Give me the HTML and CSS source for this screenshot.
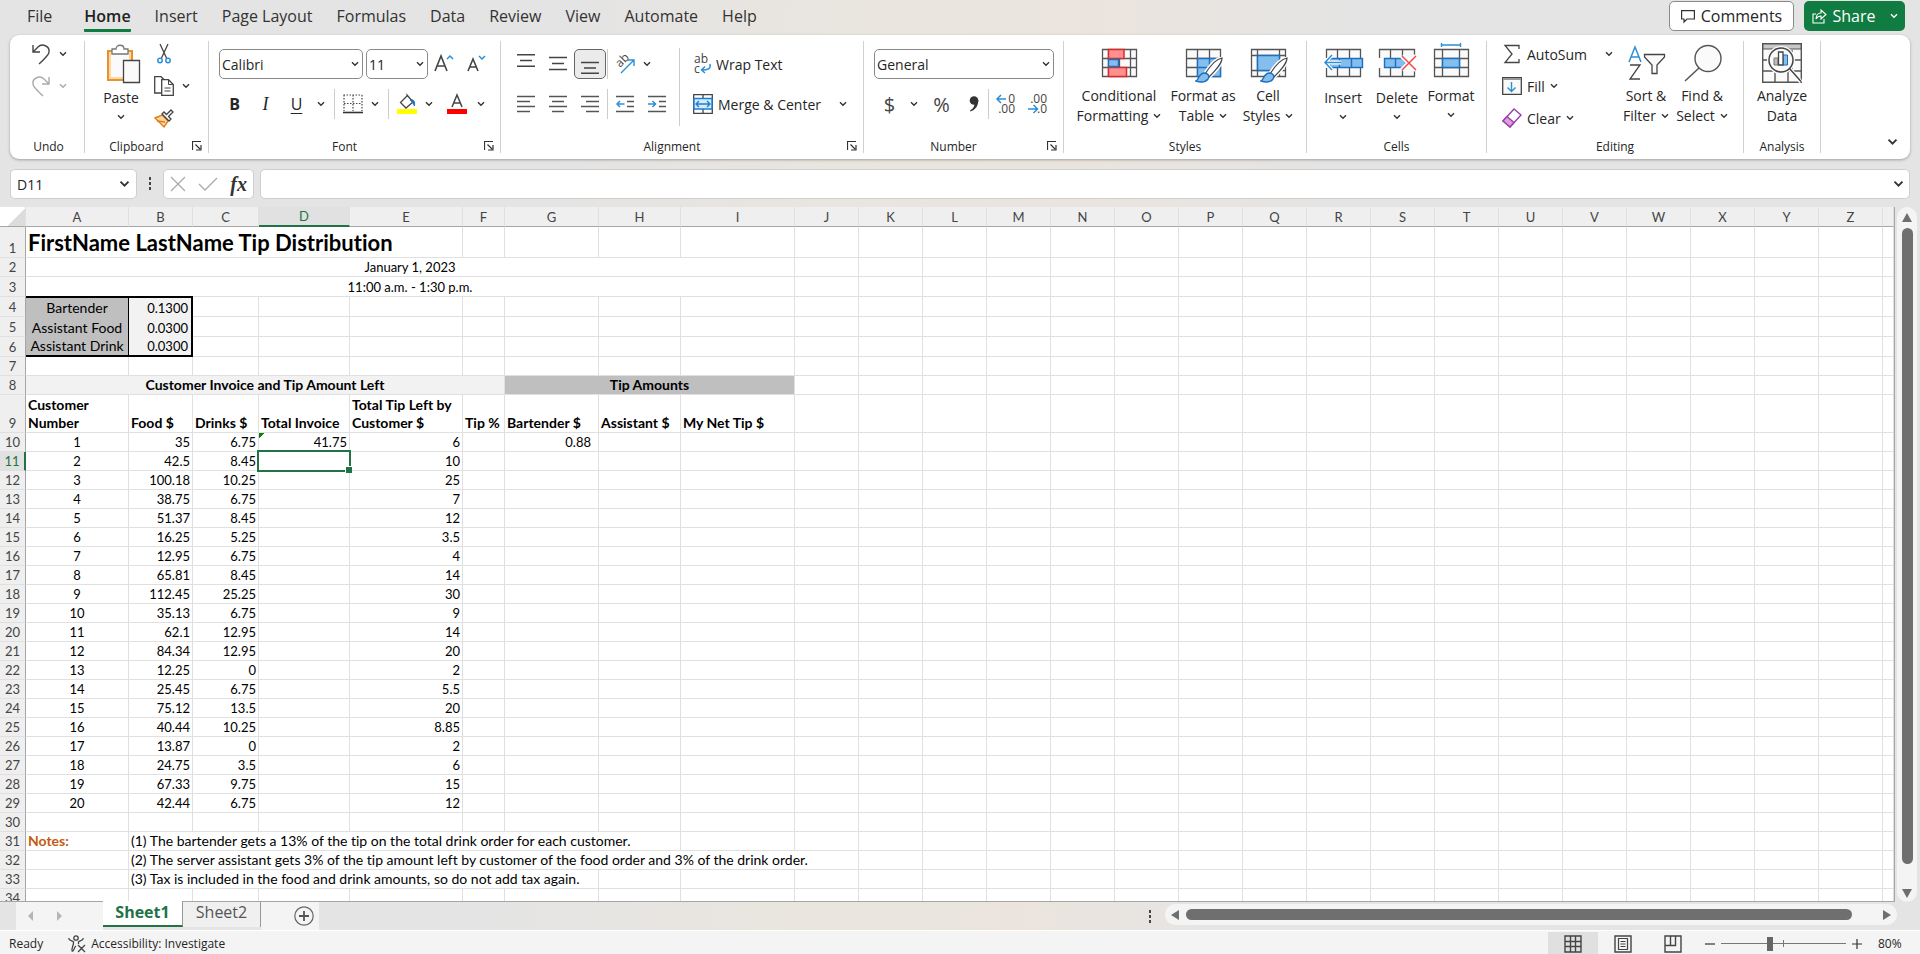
FILE: index.html
```
<!DOCTYPE html>
<html lang="en">
<head>
  <meta charset="UTF-8">
  <meta name="viewport" content="width=device-width, initial-scale=1.0">
  <title>Tip Distribution</title>
  <link rel="stylesheet" href="styles.css">
</head>
<body>
  <!-- shared glyphs -->
  <svg class="sprite" aria-hidden="true">
    <symbol id="chev" viewBox="0 0 8 6"><path d="M1 1.2 4 4.2 7 1.2" fill="none" stroke="currentColor" stroke-width="1.4"/></symbol>
    <symbol id="launch" viewBox="0 0 10 10"><path d="M.5 9V.5H9M3.5 3.5 8 8M9 4V9H4" fill="none" stroke="#333" stroke-width="1.2"/></symbol>
    <symbol id="brush" viewBox="0 0 28 26">
      <path d="M10 17C15 9 21 2 27 1 27 7 20 14 14 20Z" fill="#fff" stroke="#fff" stroke-width="4"/>
      <path d="M10 17C15 9 21 2 27 1 27 7 20 14 14 20Z" fill="#fff" stroke="#444" stroke-width="1.2"/>
      <path d="M1 24C4 23 3 17 9 16 13 16 15 19 13 22 10 26 4 25 1 24Z" fill="#83beec" stroke="#1e6fbf" stroke-width="1.4"/>
    </symbol>
  </svg>

  <header class="menu">
    <nav>
      <a href="#" class="file">File</a>
      <a href="#" class="active">Home</a>
      <a href="#">Insert</a>
      <a href="#">Page Layout</a>
      <a href="#">Formulas</a>
      <a href="#">Data</a>
      <a href="#">Review</a>
      <a href="#">View</a>
      <a href="#">Automate</a>
      <a href="#">Help</a>
    </nav>
    <button class="comments">
      <svg width="14" height="13" viewBox="0 0 14 13"><path d="M.6.6H13.4V9H6L3 12V9H.6Z" fill="none" stroke="#333" stroke-width="1.2"/></svg>
      Comments
    </button>
    <button class="share">
      <svg width="15" height="15" viewBox="0 0 15 15"><path d="M4 5H1V14H12V10M4 10C4 6 6 4 9 4V1L14 5.500 9 10V7C7 7 5 8 4 10Z" fill="none" stroke="#fff" stroke-width="1.1"/></svg>
      Share
      <svg class="chev" width="8" height="6"><use href="#chev"/></svg>
    </button>
  </header>

  <section class="ribbon">
    <!-- Undo -->
    <div class="group undo">
      <div class="stack">
        <div class="line">
          <button class="ico" aria-label="Undo"><svg width="20" height="22" viewBox="0 0 20 22"><path d="M2 2V9H9M2 9 7 4C11 0 19 3 18 9 18 12 16 13 8 21" fill="none" stroke="#444" stroke-width="1.400"/></svg></button>
          <button class="drop" aria-label="Undo list"><svg class="chev"><use href="#chev"/></svg></button>
        </div>
        <div class="line off">
          <button class="ico" aria-label="Redo"><svg width="20" height="22" viewBox="0 0 20 22"><path d="M18 2V9H11M18 9 13 4C9 0 1 3 2 9 2 12 4 13 12 21" fill="none" stroke="#aaa" stroke-width="1.400"/></svg></button>
          <button class="drop" aria-label="Redo list"><svg class="chev"><use href="#chev"/></svg></button>
        </div>
      </div>
      <div class="caption"><span>Undo</span></div>
    </div>

    <!-- Clipboard -->
    <div class="group clipboard">
      <div class="cols">
        <button class="big low">
          <svg width="40" height="40" viewBox="0 0 40 40">
            <path d="M7 8H31V37H7Z" fill="#fafafa" stroke="#e8912d" stroke-width="2"/>
            <path d="M9 10H29V35H9Z" fill="none" stroke="#fbd9a0" stroke-width="2"/>
            <path d="M11 11V6H15C15 1 23 1 23 6H27V11Z" fill="#fff" stroke="#777" stroke-width="1.300"/>
            <path d="M22.500 17.500H38.500V39.500H22.500Z" fill="#fafafa" stroke="#444" stroke-width="1.300"/>
          </svg>
          <span>Paste</span>
          <svg class="chev"><use href="#chev"/></svg>
        </button>
        <div class="stack">
          <div class="line">
            <button class="ico" aria-label="Cut"><svg width="14" height="20" viewBox="0 0 14 20"><path d="M3 0 9.500 14M11 0 4.500 14" stroke="#444" stroke-width="1.300"/><g fill="none" stroke="#2b8fd6" stroke-width="1.500"><circle cx="3" cy="16.500" r="2.200"/><circle cx="11" cy="16.500" r="2.200"/></g></svg></button>
          </div>
          <div class="line">
            <button class="ico" aria-label="Copy"><svg width="20" height="20" viewBox="0 0 20 20"><path d="M7 17H.7V.7H7L10 3.500" fill="none" stroke="#444" stroke-width="1.300"/><path d="M7.700 3.700H14.500L19.300 8.500V19.300H7.700Z" fill="#fff" stroke="#444" stroke-width="1.300"/><path d="M14.500 4V8.500H19M10.500 12H16.500M10.500 15H16.500" fill="none" stroke="#444"/></svg></button>
            <button class="drop" aria-label="Copy list"><svg class="chev"><use href="#chev"/></svg></button>
          </div>
          <div class="line">
            <button class="ico" aria-label="Format Painter"><svg width="20" height="19" viewBox="0 0 20 19"><path d="M1 9 8 6 14 12 10 18Z" fill="#fbd9a0" stroke="#e07b1a" stroke-width="1.400"/><path d="M3 12 11 13" stroke="#e07b1a" stroke-width="1.400"/><path d="M8 5 10 3 12.500 5.500 17 1 19 3 14.500 7.500 17 10 15 12Z" fill="#fff" stroke="#444" stroke-width="1.300"/></svg></button>
          </div>
        </div>
      </div>
      <div class="caption"><span>Clipboard</span><button aria-label="Clipboard settings"><svg><use href="#launch"/></svg></button></div>
    </div>

    <!-- Font -->
    <div class="group font">
      <div class="rows">
        <div class="row">
          <label class="combo family"><select aria-label="Font"><option>Calibri</option></select><svg class="chev"><use href="#chev"/></svg></label>
          <label class="combo size"><select aria-label="Font size"><option>11</option></select><svg class="chev"><use href="#chev"/></svg></label>
          <button class="w32" aria-label="Increase font size"><svg width="20" height="20" viewBox="0 0 20 20"><path d="M1 17 7 2 13 17M3 12H11" fill="none" stroke="#444" stroke-width="1.600"/><path d="M13 5 16 2 19 5" fill="none" stroke="#2b8fd6" stroke-width="1.500"/></svg></button>
          <button class="w32" aria-label="Decrease font size"><svg width="20" height="20" viewBox="0 0 20 20"><path d="M2 17 7 5 12 17M4 13H10" fill="none" stroke="#444" stroke-width="1.600"/><path d="M13 2 16 5 19 2" fill="none" stroke="#2b8fd6" stroke-width="1.500"/></svg></button>
        </div>
        <div class="row">
          <button class="w31 bold">B</button>
          <button class="w31 italic">I</button>
          <button class="w31 under">U</button>
          <button class="drop" aria-label="Underline list"><svg class="chev"><use href="#chev"/></svg></button>
          <i class="sep"></i>
          <button class="w27" aria-label="Borders"><svg width="20" height="20" viewBox="0 0 20 20"><path d="M.500 1H19M1 1V17M10 1V17M19 1V17M1 9.500H19" fill="none" stroke="#444" stroke-width="1.200" stroke-dasharray="1.500 1.500"/><path d="M0 18.500H20" stroke="#333" stroke-width="1.600"/></svg></button>
          <button class="drop" aria-label="Borders list"><svg class="chev"><use href="#chev"/></svg></button>
          <i class="sep"></i>
          <button class="w27" aria-label="Fill Color"><svg width="20" height="20" viewBox="0 0 20 20"><path d="M10 1 16 8 9 14 3.500 8.500 10 2Z" fill="#fff" stroke="#444" stroke-width="1.300"/><path d="M13 6C17 5 18 8 17.500 12 16 10 16 8 13 6Z" fill="#1e6fbf" stroke="#1e6fbf"/><path d="M0 15H20V20H0Z" fill="#ff0"/></svg></button>
          <button class="drop" aria-label="Fill colors"><svg class="chev"><use href="#chev"/></svg></button>
          <button class="w37" aria-label="Font Color"><svg width="20" height="20" viewBox="0 0 20 20"><path d="M5 13 10 1 15 13M6.500 9H13.500" fill="none" stroke="#444" stroke-width="1.500"/><path d="M0 15H20V20H0Z" fill="#f00"/></svg></button>
          <button class="drop slim" aria-label="Font colors"><svg class="chev"><use href="#chev"/></svg></button>
        </div>
      </div>
      <div class="caption"><span>Font</span><button aria-label="Font settings"><svg><use href="#launch"/></svg></button></div>
    </div>

    <!-- Alignment -->
    <div class="group alignment">
      <div class="cols">
        <div class="rows aligns">
          <div class="row">
            <button class="w32" aria-label="Top Align"><svg width="18" height="20" viewBox="0 0 18 20"><path d="M0 .700H18M3 6.500H15M0 12.300H18" stroke="#444" stroke-width="1.400"/></svg></button>
            <button class="w32" aria-label="Middle Align"><svg width="18" height="20" viewBox="0 0 18 20"><path d="M0 3.500H18M3 9.500H15M0 15.500H18" stroke="#444" stroke-width="1.400"/></svg></button>
            <button class="w32 on" aria-label="Bottom Align"><svg width="18" height="20" viewBox="0 0 18 20"><path d="M0 8.500H18M3 14H15M0 19.300H18" stroke="#444" stroke-width="1.400"/></svg></button>
            <i class="sep thin"></i>
            <button class="w32" aria-label="Orientation"><svg width="22" height="20" viewBox="0 0 22 20"><text x="0" y="0" transform="translate(6 14) rotate(-45)" font-size="12" fill="#444">ab</text><path d="M7 19 20 6M14 6H20V12" fill="none" stroke="#2b8fd6" stroke-width="1.400"/></svg></button>
            <button class="drop slim" aria-label="Orientation list"><svg class="chev"><use href="#chev"/></svg></button>
          </div>
          <div class="row">
            <button class="w32" aria-label="Align Left"><svg width="18" height="18" viewBox="0 0 18 18"><path d="M0 1.500H18M0 6.500H13M0 11.500H18M0 16.500H13" stroke="#555" stroke-width="1.500"/></svg></button>
            <button class="w32" aria-label="Center"><svg width="18" height="18" viewBox="0 0 18 18"><path d="M0 1.500H18M3 6.500H15M0 11.500H18M3 16.500H15" stroke="#555" stroke-width="1.500"/></svg></button>
            <button class="w32" aria-label="Align Right"><svg width="18" height="18" viewBox="0 0 18 18"><path d="M0 1.500H18M5 6.500H18M0 11.500H18M5 16.500H18" stroke="#555" stroke-width="1.500"/></svg></button>
            <i class="sep thin"></i>
            <button class="w32" aria-label="Decrease Indent"><svg width="18" height="18" viewBox="0 0 18 18"><path d="M0 1.500H18M11 6.500H18M11 11.500H18M0 16.500H18" stroke="#555" stroke-width="1.500"/><path d="M8.500 9H1M4 6 1 9 4 12" fill="none" stroke="#2b8fd6" stroke-width="1.500"/></svg></button>
            <button class="w32" aria-label="Increase Indent"><svg width="18" height="18" viewBox="0 0 18 18"><path d="M0 1.500H18M11 6.500H18M11 11.500H18M0 16.500H18" stroke="#555" stroke-width="1.500"/><path d="M0 9H7.500M4.500 6 7.500 9 4.500 12" fill="none" stroke="#2b8fd6" stroke-width="1.500"/></svg></button>
          </div>
        </div>
        <div class="rows wraps">
          <div class="row">
            <button class="text"><svg width="20" height="20" viewBox="0 0 20 20"><text x="3" y="9" font-size="12" fill="#444">ab</text><text x="3" y="19" font-size="12" fill="#444">c</text><path d="M19 10C20 15 17 16 11 16M14 12.500 10.500 16 14 19" fill="none" stroke="#2b8fd6" stroke-width="1.500"/></svg>Wrap Text</button>
          </div>
          <div class="row">
            <button class="text merge"><svg width="20" height="20" viewBox="0 0 20 20"><path d="M.700.700H19.300V19.300H.700ZM10 1V5M10 15V19" fill="#fff" stroke="#444" stroke-width="1.300"/><path d="M1 4.500H19V15H1Z" fill="#d6eafa" stroke="#1e7fd0" stroke-width="1.400"/><path d="M3 10H17M6 7 3 10 6 13M14 7 17 10 14 13" fill="none" stroke="#1e7fd0" stroke-width="1.400"/></svg>Merge &amp; Center</button>
            <button class="drop" aria-label="Merge list"><svg class="chev"><use href="#chev"/></svg></button>
          </div>
        </div>
      </div>
      <div class="caption"><span>Alignment</span><button aria-label="Alignment settings"><svg><use href="#launch"/></svg></button></div>
    </div>

    <!-- Number -->
    <div class="group number">
      <div class="rows">
        <div class="row">
          <label class="combo format"><select aria-label="Number format"><option>General</option></select><svg class="chev"><use href="#chev"/></svg></label>
        </div>
        <div class="row">
          <button class="w31 sign">$</button>
          <button class="drop" aria-label="Currency list"><svg class="chev"><use href="#chev"/></svg></button>
          <button class="w37 sign">%</button>
          <button class="w27" aria-label="Comma Style"><svg width="10" height="18" viewBox="0 0 10 18"><circle cx="5" cy="5.500" r="4.300" fill="#333"/><path d="M9.300 5C9.500 11 6 15 1.500 16.500L1 15.500C4 14 6 11 5.500 7Z" fill="#333"/></svg></button>
          <i class="sep thin"></i>
          <button class="w32" aria-label="Increase Decimal"><svg width="20" height="20" viewBox="0 0 20 20"><g font-size="12" fill="#444"><text x="19" y="9" text-anchor="end">0</text><text x="19" y="19" text-anchor="end">.00</text></g><path d="M10 5H1M5 1 1 5 5 9" fill="none" stroke="#2b8fd6" stroke-width="1.500"/></svg></button>
          <button class="w32" aria-label="Decrease Decimal"><svg width="20" height="20" viewBox="0 0 20 20"><g font-size="12" fill="#444"><text x="19" y="9" text-anchor="end">.00</text><text x="19" y="19" text-anchor="end">.0</text></g><path d="M0 15H9M5.500 11 9.500 15 5.500 19" fill="none" stroke="#2b8fd6" stroke-width="1.500"/></svg></button>
        </div>
      </div>
      <div class="caption"><span>Number</span><button aria-label="Number settings"><svg><use href="#launch"/></svg></button></div>
    </div>

    <!-- Styles -->
    <div class="group looks">
      <div class="cols">
        <button class="big w92">
          <svg width="40" height="40" viewBox="0 0 40 40"><path d="M3.500 6.500H37.500V33.500H3.500ZM3.500 15.500H37.500M3.500 24.500H37.500M9.500 6.500V33.500M20.500 6.500V33.500M31.500 6.500V33.500" fill="#fafafa" stroke="#555" stroke-width="1.300"/><path d="M9.500 6.500H25V15.500H9.500ZM9.500 24.500H27.500V33.500H9.500Z" fill="#ff9090" stroke="#d92b2b" stroke-width="1.500"/><path d="M9.500 16.500H19.500V23.500H9.500Z" fill="#83beec" stroke="#1e6fbf" stroke-width="1.400"/></svg>
          <span>Conditional</span>
          <span>Formatting <svg class="chev"><use href="#chev"/></svg></span>
        </button>
        <button class="big w76">
          <svg width="40" height="40" viewBox="0 0 40 40"><path d="M3.500 6.500H37.500V33.500H3.500ZM3.500 15.500H37.500M3.500 24.500H37.500M14.500 6.500V33.500M26.500 6.500V33.500" fill="#fafafa" stroke="#555" stroke-width="1.300"/><path d="M14.500 15.500H37.500V33.500H14.500ZM14.500 24.500H37.500M26.500 15.500V33.500" fill="#83beec" stroke="#1e6fbf" stroke-width="1.400"/><use href="#brush" x="12" y="14" width="28" height="26"/></svg>
          <span>Format as</span>
          <span>Table <svg class="chev"><use href="#chev"/></svg></span>
        </button>
        <button class="big w54">
          <svg width="40" height="40" viewBox="0 0 40 40"><path d="M3.500 6.500H37.500V33.500H3.500ZM3.500 12.500H37.500M3.500 27.500H37.500M9.500 6.500V33.500M31.500 6.500V33.500" fill="#fafafa" stroke="#555" stroke-width="1.300"/><path d="M9.500 12.500H31.500V27.500H9.500Z" fill="#83beec" stroke="#1e6fbf" stroke-width="1.500"/><use href="#brush" x="12" y="14" width="28" height="26"/></svg>
          <span>Cell</span>
          <span>Styles <svg class="chev"><use href="#chev"/></svg></span>
        </button>
      </div>
      <div class="caption"><span>Styles</span></div>
    </div>

    <!-- Cells -->
    <div class="group cells">
      <div class="cols">
        <button class="big low w54">
          <svg width="40" height="40" viewBox="0 0 40 40"><path d="M3.500 6.500H37.500V33.500H3.500ZM14.500 6.500V33.500M26.500 6.500V33.500" fill="#fafafa" stroke="#555" stroke-width="1.300"/><path d="M0 15H39V25H0Z" fill="#fff"/><path d="M7 15.500H39.500V24.500H7ZM16.500 15.500V24.500M28.500 15.500V24.500" fill="#83beec" stroke="#1e6fbf" stroke-width="1.400"/><path d="M18 19.500H2M9 12 2 19.500 9 27" fill="none" stroke="#fff" stroke-width="4"/><path d="M18 19.500H2M9 12 2 19.500 9 27" fill="none" stroke="#2b8fd6" stroke-width="1.500"/></svg>
          <span>Insert</span>
          <svg class="chev"><use href="#chev"/></svg>
        </button>
        <button class="big low w54">
          <svg width="40" height="40" viewBox="0 0 40 40"><path d="M2.500 6.500H37.500V33.500H2.500ZM13.500 6.500V33.500M25.500 6.500V33.500" fill="#fafafa" stroke="#555" stroke-width="1.300"/><path d="M0 15H39V25H0Z" fill="#fff"/><path d="M7.500 15.500H25L29 20 25 24.500H7.500ZM18.500 15.500V24.500" fill="#83beec" stroke="#1e6fbf" stroke-width="1.400"/><path d="M25 13 39 27M39 13 25 27" stroke="#fff" stroke-width="5"/><path d="M25 13 39 27M39 13 25 27" stroke="#f04a4a" stroke-width="1.500"/></svg>
          <span>Delete</span>
          <svg class="chev"><use href="#chev"/></svg>
        </button>
        <button class="big w54">
          <svg width="40" height="40" viewBox="0 0 40 40"><path d="M3.500 6.500H37.500V33.500H3.500ZM3.500 15.500H37.500M3.500 24.500H37.500M11.500 6.500V33.500M28.500 6.500V33.500" fill="#fafafa" stroke="#555" stroke-width="1.300"/><path d="M11.500 15.500H28.500V24.500H11.500Z" fill="#83beec" stroke="#1e6fbf" stroke-width="1.500"/><path d="M10.500 0V4M29.500 0V4M11 2H29" stroke="#2b8fd6" stroke-width="1.400"/></svg>
          <span>Format</span>
          <svg class="chev"><use href="#chev"/></svg>
        </button>
      </div>
      <div class="caption"><span>Cells</span></div>
    </div>

    <!-- Editing -->
    <div class="group editing">
      <div class="cols">
        <div class="stack">
          <div class="line">
            <button class="ico wide"><svg width="20" height="20" viewBox="0 0 20 20"><path d="M17 5V1.500H3L10 10 3 18.500H17V15" fill="none" stroke="#444" stroke-width="1.300"/></svg>AutoSum</button>
            <button class="drop end" aria-label="AutoSum list"><svg class="chev"><use href="#chev"/></svg></button>
          </div>
          <div class="line">
            <button class="ico wide"><svg width="20" height="20" viewBox="0 0 20 20"><path d="M.700 1.700H19.300V18.300H.700Z" fill="#fafafa" stroke="#444" stroke-width="1.300"/><path d="M1 3H19" stroke="#999" stroke-width="2"/><path d="M9.500 6V15.500M5.500 11.500 9.500 15.500 13.500 11.500" fill="none" stroke="#2b8fd6" stroke-width="1.400"/></svg>Fill <svg class="chev"><use href="#chev"/></svg></button>
          </div>
          <div class="line">
            <button class="ico wide"><svg width="20" height="20" viewBox="0 0 20 20"><path d="M1 13 12 1 19 7 8 19Z" fill="#fff" stroke="#9b3fa8" stroke-width="1.400"/><path d="M1 13 5 8.500 12 14.500 8 19Z" fill="#dd9fdf" stroke="#9b3fa8" stroke-width="1.400"/></svg>Clear <svg class="chev"><use href="#chev"/></svg></button>
          </div>
        </div>
        <button class="big w56">
          <svg width="40" height="40" viewBox="0 0 40 40"><path d="M3 19 9 4 15 19M5 14H13" fill="none" stroke="#2b8fd6" stroke-width="1.500"/><path d="M4 22H14L4 36H14" fill="none" stroke="#444" stroke-width="1.300"/><path d="M18.500 11.500H38.500V14L31 22V30.500H26V22L18.500 14Z" fill="#fafafa" stroke="#444" stroke-width="1.300"/></svg>
          <span>Sort &amp;</span>
          <span>Filter <svg class="chev"><use href="#chev"/></svg></span>
        </button>
        <button class="big w56">
          <svg width="40" height="40" viewBox="0 0 40 40"><circle cx="26" cy="15.500" r="13" fill="#fafafa" stroke="#555" stroke-width="1.400"/><path d="M17 25 3 38" stroke="#555" stroke-width="1.500"/></svg>
          <span>Find &amp;</span>
          <span>Select <svg class="chev"><use href="#chev"/></svg></span>
        </button>
      </div>
      <div class="caption"><span>Editing</span></div>
    </div>

    <!-- Analysis -->
    <div class="group analysis">
      <div class="cols">
        <button class="big w76">
          <svg width="40" height="40" viewBox="0 0 40 40"><path d="M.700.700H39.300V39.300H.700ZM1 17H39M1 28H39M13 28V39M26 28V39M30 7V28" fill="#fafafa" stroke="#555" stroke-width="1.400"/><path d="M1 1H39V6H1Z" fill="#c8c8c8" stroke="#555"/><circle cx="19" cy="17" r="14" fill="#fafafa"/><path d="M28 26 39 39" stroke="#fff" stroke-width="4"/><circle cx="19" cy="17" r="12" fill="#fafafa" stroke="#444" stroke-width="1.500"/><path d="M12 15H16V22H12Z" fill="#bbb" stroke="#777"/><path d="M21 12H25.500V22H21Z" fill="#83beec" stroke="#1e6fbf"/><path d="M16.500 9H21V22H16.500Z" fill="#fff" stroke="#444" stroke-width="1.300"/><path d="M27.500 25.500 39 38.500" stroke="#444" stroke-width="1.500"/></svg>
          <span>Analyze</span>
          <span>Data</span>
        </button>
      </div>
      <div class="caption"><span>Analysis</span></div>
    </div>
    <button class="collapse" aria-label="Collapse ribbon"><svg class="chev heavy"><use href="#chev"/></svg></button>
  </section>

  <section class="formula">
    <div class="namebox"><input value="D11" aria-label="Name box"><button aria-label="Names"><svg class="chev heavy"><use href="#chev"/></svg></button></div>
    <span class="dots"></span>
    <div class="fxbar">
      <button aria-label="Cancel"><svg width="16" height="16" viewBox="0 0 16 16"><path d="M1 1 15 15M15 1 1 15" stroke="#aaa" stroke-width="1.300"/></svg></button>
      <button aria-label="Enter"><svg width="20" height="16" viewBox="0 0 20 16"><path d="M1 8 7 14 19 2" fill="none" stroke="#aaa" stroke-width="1.300"/></svg></button>
      <button class="fx">fx</button>
    </div>
    <div class="entry"><input aria-label="Formula bar"><button aria-label="Expand"><svg class="chev heavy"><use href="#chev"/></svg></button></div>
  </section>

  <main>
    <div class="grid">
      <table id="sheet"></table>
    </div>
    <div class="vscroll"><i class="up"></i><b></b><i class="down"></i></div>
  </main>

  <footer class="tabs">
    <div class="arrows"><i class="prev"></i><i class="next"></i></div>
    <button class="tab current">Sheet1</button>
    <button class="tab">Sheet2</button>
    <button class="add" aria-label="New sheet"><svg width="20" height="20" viewBox="0 0 20 20"><circle cx="10" cy="10" r="9.200" fill="none" stroke="#666" stroke-width="1.200"/><path d="M10 5V15M5 10H15" stroke="#555" stroke-width="1.800"/></svg></button>
    <span class="dots"></span>
    <div class="hscroll"><i class="prev"></i><b></b><i class="next"></i></div>
  </footer>

  <footer class="status">
    <span class="ready">Ready</span>
    <button class="access"><svg width="18" height="18" viewBox="0 0 18 18"><g fill="none" stroke="#444" stroke-width="1.300"><circle cx="8" cy="3" r="2.200"/><path d="M1 3C0 5 5 6 5.500 7 6 10 3 14 4 16 6 17 6 12 8 11M15 3C16 5 11 6 10.500 7V9M10 10 17 17M17 10 10 17"/></g></svg>Accessibility: Investigate</button>
    <div class="views">
      <button class="on" aria-label="Normal"><svg width="18" height="18" viewBox="0 0 18 18"><path d="M1 1H17V17H1ZM1 6.500H17M1 11.500H17M6.500 1V17M11.500 1V17" fill="none" stroke="#444" stroke-width="1.400"/></svg></button>
      <button aria-label="Page Layout"><svg width="18" height="18" viewBox="0 0 18 18"><path d="M1 1H17V17H1Z" fill="none" stroke="#444" stroke-width="1.400"/><path d="M4.500 3.500H13.500V14.500H4.500ZM6.500 6.500H11.500M6.500 9H11.500M6.500 11.500H11.500" fill="none" stroke="#444" stroke-width="1.200"/></svg></button>
      <button aria-label="Page Break"><svg width="18" height="18" viewBox="0 0 18 18"><path d="M1 1H17V17H1ZM1 10.500H11.500V1M6.500 1V10" fill="none" stroke="#444" stroke-width="1.400"/></svg></button>
    </div>
    <div class="zoom">
      <button aria-label="Zoom out"><svg width="10" height="10"><path d="M0 5H10" stroke="#333" stroke-width="1.200"/></svg></button>
      <input type="range" min="10" max="190" value="80" aria-label="Zoom">
      <button aria-label="Zoom in"><svg width="10" height="10"><path d="M0 5H10M5 0V10" stroke="#333" stroke-width="1.200"/></svg></button>
      <span>80%</span>
    </div>
  </footer>

  <script src="sheet.js"></script>
</body>
</html>
```
FILE: styles.css
```
* { box-sizing: border-box; }
body {
  margin: 0; height: 100vh; overflow: hidden;
  display: flex; flex-direction: column;
  background: linear-gradient(95deg, #e4e4e4 28%, #e9e5df 42%, #ebe4de 55%, #e4e4e4 68%);
  color: #262626; font-family: "Open Sans", "Noto Sans", sans-serif; font-size: 14px;
}
button, input, select { font: inherit; color: inherit; border: 0; background: none; padding: 0; margin: 0; outline: 0; }
button { display: flex; align-items: center; justify-content: center; white-space: nowrap; }
svg { flex: none; display: block; overflow: visible; }
.sprite { position: absolute; width: 0; height: 0; }
.chev { width: 8px; height: 6px; color: #333; }
.chev.heavy { width: 11px; height: 8px; }

/* ---- menu ---- */
.menu { display: flex; align-items: flex-start; height: 35px; padding: 1px 15px 0 27px; font-size: 16px; flex: none; }
.menu nav { display: flex; gap: 24px; flex: 1; }
.menu a { color: #333; text-decoration: none; line-height: 31px; height: 31px; border-bottom: 3px solid transparent; }
.menu .file { margin-right: 8px; }
.menu .active { font-weight: 600; color: #222; border-radius: 1px; border-color: #0f7b41; }
.comments, .share { height: 30px; gap: 6px; border-radius: 5px; }
.comments { width: 125px; background: #fff; border: 1px solid #8a8a8a; margin-right: 10px; }
.share { width: 101px; background: #107c41; color: #fff; }
.share .chev { color: #fff; margin-left: 8px; }

/* ---- ribbon ---- */
.ribbon {
  display: flex; flex: none; height: 124px; margin: 0 10px; padding: 6px 0;
  background: #fff; border-radius: 9px; box-shadow: 0 1px 3px rgba(0,0,0,.3);
}
.group { display: flex; flex-direction: column; border-right: 1px solid #d0d0d0; }
.cols { display: flex; }
.group > :first-child { height: 98px; }
.caption { display: flex; height: 14px; font-size: 12px; line-height: 16px; }
.caption span { flex: 1; text-align: center; }
.caption button { width: 18px; margin-right: 2px; }
.caption button svg { width: 10px; height: 10px; }
.undo { width: 75px; padding-left: 3px; }
.undo .stack { padding-left: 15px; }
.clipboard { width: 124px; padding-left: 6px; }
.clipboard .caption { margin-left: -6px; }
.font { width: 292px; }
.alignment { width: 363px; }
.number { width: 200px; }
.looks { width: 243px; }
.looks .cols, .cells .cols { padding-left: 9px; }
.cells { width: 180px; }
.editing { width: 257px; }
.analysis { width: 77px; }

.stack { display: flex; flex-direction: column; gap: 6px; }
.line { display: flex; height: 26px; }
.ico { width: 26px; }
.ico.wide { width: auto; gap: 5px; }
.drop { width: 18px; }
.drop.slim { width: 12px; }
.drop.end { margin-left: auto; }
.off .chev { color: #aaa; }
.editing .stack { width: 131px; padding-left: 15px; }

.big { display: flex; flex-direction: column; justify-content: flex-start; width: 60px; padding-top: 2px; line-height: 20px; }
.big > svg:first-child { margin-bottom: 3px; }
.big.low > svg:first-child { margin-bottom: 5px; }
.big span { display: flex; align-items: center; gap: 5px; }
.big > .chev { margin-top: 6px; }
.w27 { width: 27px; }
.w31 { width: 31px; }
.w32 { width: 32px; }
.w37 { width: 37px; }
.w54 { width: 54px; }
.w56 { width: 56px; }
.w76 { width: 76px; }
.w92 { width: 92px; }

.rows { display: flex; flex-direction: column; gap: 10px; padding: 8px 0 0 10px; }
.row { display: flex; height: 30px; }
.sep { width: 9px; border-left: 1px solid #ccc; margin-left: 4px; margin-right: -4px; }
.sep.thin { width: 3px; margin: 0 -1px 0 1px; }
.combo { display: flex; align-items: center; border: 1px solid #8a8a8a; border-radius: 5px; padding: 0 3px 0 2px; }
.combo select { flex: 1; appearance: none; min-width: 0; }
.family { width: 144px; margin-right: 3px; }
.size { width: 62px; }
.format { width: 180px; }
.bold { font-weight: 700; font-size: 16px; }
.italic { font-family: "Liberation Serif", serif; font-style: italic; font-size: 18px; }
.under { text-decoration: underline; text-underline-offset: 3px; font-size: 16px; }
.sign { font-size: 20px; color: #444; }
.on { background: #ebebeb; }
.row .on { border: 1px solid #666; border-radius: 5px; }
.aligns { width: 179px; border-right: 1px solid #ccc; height: 78px; }
.alignment .rows { padding-left: 9px; }
.alignment .aligns { margin-top: 7px; padding-top: 1px; }
.alignment .wraps { padding-left: 11px; }
.text { gap: 5px; }
.merge { width: 132px; margin-right: 11px; }
.collapse { margin: auto 12px 4px auto; width: 12px; height: 14px; }

/* ---- formula bar ---- */
.formula { display: flex; flex: none; height: 30px; margin: 10px 10px 8px; }
.namebox, .fxbar, .entry { display: flex; background: #fff; border: 1px solid #cfcfcf; border-radius: 5px; }
.namebox { width: 127px; padding: 0 6px; }
.namebox input, .entry input { flex: 1; min-width: 0; }
.dots { width: 2px; height: 14px; margin: auto 12px; background: repeating-linear-gradient(#444 0 3px, transparent 3px 5px); }
.fxbar { width: 91px; justify-content: space-around; }
.fx { font: italic 700 20px "Liberation Serif", serif; color: #333; }
.entry { flex: 1; margin-left: 6px; padding: 0 5px; }

/* ---- sheet ---- */
main { flex: 1; min-height: 0; display: flex; }
.grid { flex: 1; min-width: 0; overflow: hidden; background: #fff; border: solid #a6a6a6; border-width: 0 1px 1px 0; }
table { width: 100%; table-layout: fixed; border-spacing: 0; font-family: Lato, sans-serif; font-variant-ligatures: none; font-size: 13px; line-height: 18px; color: #000; }
th, td { padding: 0 2px; border: solid #e0e0e0; border-width: 0 1px 1px 0; white-space: nowrap; vertical-align: bottom; text-align: right; }
th { background: #efefef; color: #444; font-weight: 400; text-align: center; padding: 0; }
thead th { height: 20px; border-bottom-color: #a6a6a6; }
tbody th { border-right-color: #a6a6a6; }
th.hot { background: #e1e1e1; color: #217346; }
thead th.hot { border-bottom: 2px solid #217346; line-height: 17px; }
tbody th.hot { border-right: 2px solid #217346; }
.corner { background: linear-gradient(135deg, transparent 60%, #dcdcdc 60%); }
.t { font-size: 14px; }
.row-1 td { height: 31px; }
.row-1 .title { font-size: 22px; font-weight: 700; line-height: 28px; }
.row-3 td, .row-4 td, .row-5 td, .row-6 td { height: 20px; }
.row-9 td { white-space: normal; }
.row-9 td, .row-9 th { height: 38px; }
.left { text-align: left; }
.center { text-align: center; }
.b { font-weight: 700; }
.note { color: #c55a11; }
.dark { background: #bfbfbf; }
.light { background: #f2f2f2; }
.inset { padding-right: 7px; }
td.rate { border-right: 1px solid #000; border-bottom: 0; }
td.val { padding-right: 3px; border-right: 2px solid #000; border-bottom: 0; }
.row-4 .rate, .row-4 .val { border-top: 1px solid #000; box-shadow: 0 -1px #000; }
.row-6 .rate, .row-6 .val { border-bottom: 2px solid #000; }
.flag { background: linear-gradient(135deg, #107c10 4px, transparent 4px); }
.picked { position: relative; }
.picked::before { content: ""; position: absolute; inset: -2px -2px -2px -2px; border: 2px solid #217346; }
.picked::after { content: ""; position: absolute; right: -3px; bottom: -3px; width: 6px; height: 6px; background: #217346; border: solid #fff; border-width: 1px 0 0 1px; }

/* ---- scroll bars ---- */
.vscroll { width: 20px; margin: 0 3px 0 2px; padding: 6px 0 4px; border-radius: 10px; background: #f4f4f4; display: flex; flex-direction: column; align-items: center; }
.vscroll b { width: 11px; height: 636px; flex: 0 1 auto; margin: 6px 0 auto; border-radius: 6px; background: #6f6f6f; }
.up, .down { border: solid transparent; border-width: 0 5px; }
.up { border-bottom: 9px solid #6f6f6f; }
.down { border-top: 9px solid #6f6f6f; }
.prev, .next { border: solid transparent; border-width: 5px 0; }
.prev { border-right: 8px solid #6f6f6f; }
.next { border-left: 8px solid #6f6f6f; }
.hscroll { width: 732px; height: 21px; margin: 2px 23px 0 0; padding: 0 6px; border-radius: 10px; background: #f4f4f4; display: flex; align-items: center; }
.hscroll b { flex: 1; height: 11px; margin: 0 31px 0 7px; border-radius: 6px; background: #6f6f6f; }

/* ---- sheet tabs ---- */
.tabs { display: flex; height: 28px; flex: none; }
.arrows { display: flex; align-items: center; gap: 24px; width: 87px; margin-left: 16px; padding-left: 12px; background: #f4f4f4; }
.arrows .prev { border-right: 5px solid #b5b5b5; }
.arrows .next { border-left: 5px solid #b5b5b5; }
.tab { width: 78px; height: 25px; font-size: 16px; line-height: 20px; padding-bottom: 6px; color: #555; background: #f0f0f0; border-right: 1px solid #999; }
.tab.current { width: 80px; height: 26px; margin-top: -1px; padding-bottom: 3px; background: #fff; color: #217346; font-weight: 700; border-bottom: 2px solid #217346; }
.add { width: 58px; padding-left: 28px; background: #f4f4f4; }
.tabs .dots { margin: 8px 14px 0 auto; }

/* ---- status bar ---- */
.status { display: flex; align-items: center; height: 24px; flex: none; background: #f4f4f4; border-top: 1px solid #fff; font-size: 12px; padding: 2px 0 0 9px; }
.access { gap: 5px; margin-left: 25px; }
.views { display: flex; margin-left: auto; }
.views button { width: 50px; height: 23px; }
.views .on { background: #e0e0e0; }
.zoom { display: flex; align-items: center; gap: 6px; padding: 0 17px 0 7px; }
.zoom span { margin-left: 10px; width: 25px; }
.zoom input { appearance: none; width: 125px; height: 14px; background: linear-gradient(#777, #777) center / 100% 1px no-repeat, linear-gradient(#777, #777) center / 1px 7px no-repeat; }
.zoom input::-webkit-slider-thumb { appearance: none; width: 6px; height: 14px; background: #666; }
```
FILE: sheet.js
```
// column widths, A..Z
const widths = [103, 64, 66, 91, 113, 42, 94, 82, 114];
while (widths.length < 26) widths.push(64);

// food, drinks, tip left by customer
const orders = [
  [35, 6.75, 6], [42.5, 8.45, 10], [100.18, 10.25, 25], [38.75, 6.75, 7],
  [51.37, 8.45, 12], [16.25, 5.25, 3.5], [12.95, 6.75, 4], [65.81, 8.45, 14],
  [112.45, 25.25, 30], [35.13, 6.75, 9], [62.1, 12.95, 14], [84.34, 12.95, 20],
  [12.25, 0, 2], [25.45, 6.75, 5.5], [75.12, 13.5, 20], [40.44, 10.25, 8.85],
  [13.87, 0, 2], [24.75, 3.5, 6], [67.33, 9.75, 15], [42.44, 6.75, 12]
];

// cell = [text, classes, colspan]
const rows = {
  1: [['FirstName LastName Tip Distribution', 'title left', 5]],
  2: [['January 1, 2023', 'center', 9]],
  3: [['11:00 a.m. - 1:30 p.m.', 'center', 9]],
  4: [['Bartender', 't rate dark center'], ['0.1300', 'val light']],
  5: [['Assistant Food', 't rate dark center'], ['0.0300', 'val light']],
  6: [['Assistant Drink', 't rate dark center'], ['0.0300', 'val light']],
  8: [['Customer Invoice and Tip Amount Left', 't b light center', 6], ['Tip Amounts', 't b dark center', 3]],
  9: ['Customer Number', 'Food $', 'Drinks $', 'Total Invoice', 'Total Tip Left by Customer $',
      'Tip %', 'Bartender $', 'Assistant $', 'My Net Tip $'].map(t => [t, 't b left']),
  31: [['Notes:', 't b note left'], ['(1) The bartender gets a 13% of the tip on the total drink order for each customer.', 't left', 7]],
  32: [[''], ['(2) The server assistant gets 3% of the tip amount left by customer of the food order and 3% of the drink order.', 't left', 9]],
  33: [[''], ['(3) Tax is included in the food and drink amounts, so do not add tax again.', 't left', 6]]
};
orders.forEach(([food, drinks, tip], i) => {
  rows[10 + i] = [[i + 1, 'center'], [food], [drinks], [''], [tip]];
});
rows[10][3] = ['41.75', 'flag'];
rows[10].push([''], ['0.88', 'inset']);
rows[11][3] = ['', 'picked'];

let html = '<colgroup><col style="width:26px">' + widths.map(w => `<col style="width:${w}px">`).join('') + '<col></colgroup>';
html += '<thead><tr><th class="corner"></th>';
for (let c = 0; c < 26; c++) html += `<th${c === 3 ? ' class="hot"' : ''}>${String.fromCharCode(65 + c)}</th>`;
html += '<th></th></tr></thead><tbody>';

for (let r = 1; r <= 34; r++) {
  html += `<tr class="row-${r}"><th${r === 11 ? ' class="hot"' : ''}>${r}</th>`;
  let used = 0;
  for (const [text, cls = '', span = 1] of rows[r] || []) {
    html += `<td class="${cls}" colspan="${span}">${text}</td>`;
    used += span;
  }
  html += '<td></td>'.repeat(27 - used) + '</tr>';
}
document.getElementById('sheet').innerHTML = html + '</tbody>';
```
